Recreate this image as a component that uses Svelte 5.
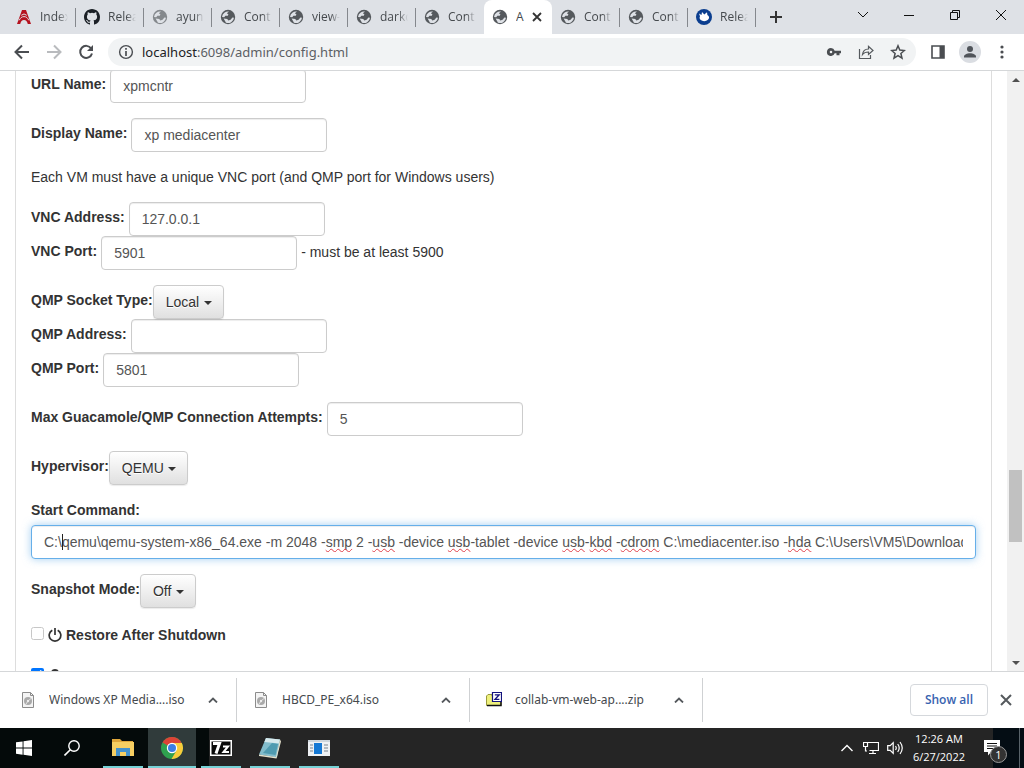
<script>
	const tabs = [
		{ icon: 'apache', title: 'Index' },
		{ icon: 'github', title: 'Relea' },
		{ icon: 'globe', title: 'ayun', loading: true },
		{ icon: 'globe', title: 'Cont' },
		{ icon: 'globe', title: 'view-' },
		{ icon: 'globe', title: 'darkc' },
		{ icon: 'globe', title: 'Cont' },
		{ icon: 'globe', title: 'A', active: true },
		{ icon: 'globe', title: 'Cont' },
		{ icon: 'globe', title: 'Cont' },
		{ icon: 'xfce', title: 'Relea' }
	];

	const downloads = [
		{ name: 'Windows XP Media....iso', kind: 'iso' },
		{ name: 'HBCD_PE_x64.iso', kind: 'iso' },
		{ name: 'collab-vm-web-ap....zip', kind: 'zip' }
	];

	const scroll = { top: 67.5, size: 12.7 };

	let urlName = 'xpmcntr';
	let displayName = 'xp mediacenter';
	let vncAddress = '127.0.0.1';
	let vncPort = '5901';
	let qmpAddress = '';
	let qmpPort = '5801';
	let attempts = '5';
	let restore = false;
	let startCommand = 'C:\\qemu\\qemu-system-x86_64.exe -m 2048 -smp 2 -usb -device usb-tablet -device usb-kbd -cdrom C:\\mediacenter.iso -hda C:\\Users\\VM5\\Downloads';

	const caretAt = 3;
	const unknownWords = /(smp|usb|kbd|cdrom|hda)/;

	// split the command so that each unknown word can be underlined
	$: before = startCommand.slice(0, caretAt);
	$: pieces = startCommand.slice(caretAt).split(unknownWords);
</script>

<svelte:head>
	<title>Admin</title>
</svelte:head>

<div class="browser">
	<header class="tab-strip">
		<div class="tabs" role="tablist">
			{#each tabs as tab}
				<div class="tab" class:active={tab.active} class:loading={tab.loading} role="tab" aria-selected={!!tab.active} tabindex="0">
					<svg width="16" height="16" viewBox="0 0 16 16">
						{#if tab.icon === 'globe'}
							<circle cx="8" cy="8" r="7.2" fill="#55595d" />
							<path d="M9 2.600 6.800 4.200l1.600 1-.6 1.500H5.400L4.200 8.300l-2.200-.4A6.100 6.100 0 0 1 9 2.600zM3.600 9.600l3.700.4 1 1.500 2.300-.7 1.800-2.200 1.600.2A6 6 0 0 1 6 13.700z" fill="#dee1e6" />
						{:else if tab.icon === 'apache'}
							<path d="M1 15 6 1h4l5 14h-3.200c-.7-2.600-1.700-4-3.800-4s-3.100 1.400-3.800 4z" fill="#b5121f" />
							<path d="M3.200 11.300C4.200 9 5.700 7.600 8 7.600s3.800 1.400 4.800 3.700M5.300 6.300Q8 3.600 10.700 6.300" fill="none" stroke="#dee1e6" stroke-width="1" />
						{:else if tab.icon === 'github'}
							<path fill="#1b2026" d="M8 0C3.580 0 0 3.580 0 8c0 3.540 2.290 6.530 5.470 7.590.4.070.55-.170.55-.380 0-.190-.010-.820-.010-1.490-2.010.370-2.530-.490-2.690-.940-.090-.230-.480-.940-.820-1.130-.280-.150-.680-.520-.010-.530.630-.010 1.080.580 1.230.820.720 1.210 1.870.870 2.330.660.070-.520.280-.870.510-1.070-1.780-.200-3.640-.890-3.640-3.950 0-.870.310-1.590.820-2.150-.080-.200-.360-1.020.080-2.120 0 0 .670-.210 2.200.820a7.600 7.600 0 0 1 4 0c1.530-1.040 2.200-.820 2.200-.820.440 1.100.160 1.920.080 2.120.510.560.820 1.270.820 2.150 0 3.070-1.870 3.750-3.650 3.950.290.250.540.730.540 1.480 0 1.070-.010 1.930-.010 2.200 0 .210.150.460.550.380A8 8 0 0 0 16 8c0-4.420-3.580-8-8-8z" />
						{:else}
							<circle cx="8" cy="8" r="8" fill="#0b3e8f" />
							<path d="M3 4.500 5.500 6 6 3l2.300 2.600L11 3.200l.4 2.700c2 .8 2.300 3.300.6 4.900-2 1.700-5.400 1.800-7.300.2C3.500 9.900 3.300 8.600 4 7.300z" fill="#fff" />
						{/if}
					</svg>
					<span class="title">{tab.title}</span>
					{#if tab.active}
						<button class="tab-close" aria-label="Close tab">
							<svg width="10" height="10" viewBox="0 0 10 10"><path d="M1 1l8 8M9 1 1 9" stroke="#333" stroke-width="1.8" /></svg>
						</button>
					{/if}
				</div>
			{/each}
		</div>
		<button class="new-tab" aria-label="New tab">
			<svg width="12" height="12" viewBox="0 0 12 12"><path d="M6 0v12M0 6h12" stroke="#333" stroke-width="2" /></svg>
		</button>
		<div class="window-buttons">
			<button aria-label="Search tabs"><svg width="12" height="12" viewBox="0 0 12 12"><path d="M1 3l5 5 5-5" /></svg></button>
			<button aria-label="Minimize"><svg width="12" height="12" viewBox="0 0 12 12"><path d="M1 6.500h10" /></svg></button>
			<button aria-label="Restore"><svg width="12" height="12" viewBox="0 0 12 12"><path d="M1.500 3.500h7v7h-7zM3.500 3.500v-2h7v7h-2" /></svg></button>
			<button aria-label="Close"><svg width="12" height="12" viewBox="0 0 12 12"><path d="M1 1l10 10M11 1 1 11" /></svg></button>
		</div>
	</header>

	<nav class="toolbar">
		<button aria-label="Back"><svg width="16" height="16" viewBox="0 0 16 16"><path d="M15 8H2M8 1.500 1.500 8 8 14.500" fill="none" stroke="#4a4d51" stroke-width="2" /></svg></button>
		<button aria-label="Forward"><svg width="16" height="16" viewBox="0 0 16 16"><path d="M1 8h13M8 1.500 14.500 8 8 14.500" fill="none" stroke="#b9bbbe" stroke-width="2" /></svg></button>
		<button aria-label="Reload">
			<svg width="16" height="16" viewBox="0 0 16 16"><path d="M13.200 4.500A6 6 0 1 0 14 9.500" fill="none" stroke="#4a4d51" stroke-width="2" /><path d="M15 1v6H9z" fill="#4a4d51" /></svg>
		</button>
		<div class="omnibox">
			<svg width="16" height="16" viewBox="0 0 16 16"><circle cx="8" cy="8" r="6.400" fill="none" stroke="#4a4d51" stroke-width="1.400" /><path d="M8 7v5M8 4v1.700" stroke="#4a4d51" stroke-width="1.700" /></svg>
			<div class="address" role="textbox" aria-label="Address" tabindex="0"><b>localhost</b>:6098/admin/config.html</div>
			<button aria-label="Passwords"><svg width="16" height="16" viewBox="0 0 16 16"><path d="M5 4a4 4 0 1 0 3.700 5.300H10.500v2h3V9.300H15V6.700H8.700A4 4 0 0 0 5 4zm0 2.700a1.300 1.300 0 1 1 0 2.600 1.300 1.300 0 0 1 0-2.600z" fill="#4a4d51" fill-rule="evenodd" /></svg></button>
			<button aria-label="Share"><svg width="16" height="16" viewBox="0 0 16 16"><path d="M1.500 5v9.500h11V11M4.500 10.500c.5-4 3-5.500 6-5.500V2.300L15 6.500l-4.500 4V8C8 8 6 8.500 4.500 10.500z" fill="none" stroke="#55595d" stroke-width="1.200" /></svg></button>
			<button aria-label="Bookmark"><svg width="16" height="16" viewBox="0 0 16 16"><path d="m8 1.800 1.800 4.300 4.600.4-3.500 3 1.100 4.600L8 11.700l-4 2.400 1.100-4.600-3.500-3 4.600-.4z" fill="none" stroke="#4a4d51" stroke-width="1.500" /></svg></button>
		</div>
		<button aria-label="Side panel"><svg width="16" height="16" viewBox="0 0 16 16"><path d="M2 2h12v12H2z" fill="none" stroke="#4a4d51" stroke-width="1.600" /><path d="M9.500 2H14v12H9.500z" fill="#4a4d51" /></svg></button>
		<button aria-label="Profile"><svg width="22" height="22" viewBox="0 0 22 22"><circle cx="11" cy="11" r="11" fill="#dadde2" /><circle cx="11" cy="8" r="3" fill="#50545a" /><path d="M5 16.500v-1c0-2 3-3.300 6-3.300s6 1.300 6 3.300v1z" fill="#50545a" /></svg></button>
		<button aria-label="Menu"><svg width="16" height="16" viewBox="0 0 16 16" fill="#4a4d51"><circle cx="8" cy="3" r="1.600" /><circle cx="8" cy="8" r="1.600" /><circle cx="8" cy="13" r="1.600" /></svg></button>
	</nav>

	<div class="viewport">
		<main>
			<form class="panel">
				<div class="group row">
					<label for="url-name">URL Name:</label>
					<input id="url-name" class="control" bind:value={urlName}>
				</div>
				<div class="group row">
					<label for="display-name">Display Name:</label>
					<input id="display-name" class="control" bind:value={displayName}>
				</div>
				<p class="group">Each VM must have a unique VNC port (and QMP port for Windows users)</p>
				<div class="group">
					<div class="row">
						<label for="vnc-address">VNC Address:</label>
						<input id="vnc-address" class="control" bind:value={vncAddress}>
					</div>
					<div class="row">
						<label for="vnc-port">VNC Port:</label>
						<input id="vnc-port" class="control" bind:value={vncPort}>
						<span class="hint">- must be at least 5900</span>
					</div>
				</div>
				<div class="group">
					<div class="row tight">
						<label for="qmp-type">QMP Socket Type:</label>
						<span class="dropdown"><select id="qmp-type"><option>Local</option></select></span>
					</div>
					<div class="row">
						<label for="qmp-address">QMP Address:</label>
						<input id="qmp-address" class="control" bind:value={qmpAddress}>
					</div>
					<div class="row">
						<label for="qmp-port">QMP Port:</label>
						<input id="qmp-port" class="control" bind:value={qmpPort}>
					</div>
				</div>
				<div class="group row">
					<label for="attempts">Max Guacamole/QMP Connection Attempts:</label>
					<input id="attempts" class="control" bind:value={attempts}>
				</div>
				<div class="group row tight">
					<label for="hypervisor">Hypervisor:</label>
					<span class="dropdown"><select id="hypervisor"><option>QEMU</option></select></span>
				</div>
				<div class="group command">
					<label for="start-command">Start Command:</label>
					<div class="command-box">
						<input id="start-command" class="control focused" spellcheck="false" bind:value={startCommand}>
						<div class="marks" aria-hidden="true">{before}<i class="caret"></i>{#each pieces as piece, i}{#if i % 2}<u>{piece}</u>{:else}{piece}{/if}{/each}</div>
					</div>
				</div>
				<div class="group row tight">
					<label for="snapshot">Snapshot Mode:</label>
					<span class="dropdown"><select id="snapshot"><option>Off</option></select></span>
				</div>
				<div class="check">
					<input id="restore" type="checkbox" bind:checked={restore}>
					<label for="restore">
						<svg width="14" height="14" viewBox="0 0 14 14"><path d="M4.300 2.200a5.800 5.800 0 1 0 5.400 0M7 0v7" fill="none" stroke="#333" stroke-width="1.700" /></svg>
						Restore After Shutdown
					</label>
				</div>
				<div class="check">
					<input type="checkbox" checked aria-label="Turbo">
					<svg width="14" height="14" viewBox="0 0 14 14"><circle cx="7" cy="4" r="4" fill="#333" /><path d="M0 14c0-4 3-5 7-5s7 1 7 5z" fill="#333" /></svg>
				</div>
			</form>
		</main>
		<div class="scrollbar">
			<button aria-label="Scroll up"><svg width="8" height="4" viewBox="0 0 8 4"><path d="M0 4 4 0l4 4z" fill="#505050" /></svg></button>
			<div class="track">
				<div class="thumb" style="top: {scroll.top}%; height: {scroll.size}%"></div>
			</div>
			<button aria-label="Scroll down"><svg width="8" height="4" viewBox="0 0 8 4"><path d="M0 0h8L4 4z" fill="#505050" /></svg></button>
		</div>
	</div>

	<footer class="downloads">
		{#each downloads as file}
			<div class="download">
				<svg width="16" height="16" viewBox="0 0 16 16">
					{#if file.kind === 'iso'}
						<path d="M2.500.5h8l3 3v12h-11z" fill="#f4f4f4" stroke="#8c8c8c" />
						<path d="M10.500.5v3h3" fill="none" stroke="#8c8c8c" />
						<circle cx="8" cy="9" r="4" fill="#a9a9a9" />
						<path d="m8 9 3-2.500M8 9l-2 3" stroke="#e4e4e4" />
						<circle cx="8" cy="9" r="1.200" fill="#eee" />
					{:else}
						<path d="M.5 4 2 2.500h4V4h9v9.500H.5z" fill="#eef07c" stroke="#9a9a3c" />
						<path d="M1 13.500h14V10" fill="none" stroke="#111" stroke-width="1.500" />
						<path d="M6.500.5h9v9h-9z" fill="#fff" stroke="#12127c" stroke-width="1.200" />
						<path d="M8.800 2.800h4.400L9 7.300h4.400" fill="none" stroke="#12127c" stroke-width="1.300" />
					{/if}
				</svg>
				<span class="file-name">{file.name}</span>
				<button aria-label="Options for {file.name}"><svg width="10" height="6" viewBox="0 0 10 6"><path d="m1 5.500 4-4 4 4" fill="none" stroke="#55595d" stroke-width="1.800" /></svg></button>
			</div>
		{/each}
		<button class="show-all">Show all</button>
		<button class="close-shelf" aria-label="Close downloads"><svg width="12" height="12" viewBox="0 0 12 12"><path d="m1 1 10 10M11 1 1 11" stroke="#55595d" stroke-width="2" /></svg></button>
	</footer>

	<footer class="taskbar">
		<div class="launchers">
			<button aria-label="Start"><svg width="16" height="16" viewBox="0 0 16 16"><path d="M0 2.300 6.600 1.400v6.200H0zM7.500 1.200 16 0v7.600H7.500zM0 8.500h6.600v6.200L0 13.800zM7.500 8.500H16V16l-8.500-1.200z" fill="#fff" /></svg></button>
			<button aria-label="Search"><svg width="16" height="16" viewBox="0 0 16 16"><circle cx="10" cy="6" r="5.200" fill="none" stroke="#fff" stroke-width="1.400" /><path d="M6.300 9.700.500 15.500" stroke="#fff" stroke-width="1.600" /></svg></button>
		</div>
		<div class="apps">
			<button class="open" aria-label="File Explorer">
				<svg width="22" height="20" viewBox="0 0 22 20"><path d="M0 1h8l2 2h11v5H0z" fill="#dfa63a" /><path d="M0 4h22v14H0z" fill="#f7cf62" /><path d="M4 10h14v8h-4v-4H8v4H4z" fill="#4592cc" /></svg>
			</button>
			<button class="open current" aria-label="Google Chrome">
				<svg width="22" height="22" viewBox="0 0 22 22">
					<circle cx="11" cy="11" r="11" fill="#2fa14f" />
					<path d="M11 11 1.500 5.500A11 11 0 0 1 20.500 5.500z" fill="#dd4336" />
					<path d="M11 11V6h9.800A11 11 0 0 1 10.500 22l5-8.500z" fill="#f9cb3b" />
					<circle cx="11" cy="11" r="5.200" fill="#fff" /><circle cx="11" cy="11" r="4" fill="#3d7de4" />
				</svg>
			</button>
			<button class="open" aria-label="7-Zip">
				<svg width="22" height="16" viewBox="0 0 22 16"><path d="M0 0h22v16H0z" fill="#fff" /><path d="M1.500 1.500h19v13h-19z" fill="#080808" /><path d="M3 3.500h6.500L6 13.500" fill="none" stroke="#fff" stroke-width="3" /><path d="M13 6.500h5L13.500 12H19" fill="none" stroke="#fff" stroke-width="2" /></svg>
			</button>
			<button class="open" aria-label="Notepad">
				<svg width="22" height="22" viewBox="0 0 22 22"><path d="M7 1 21 2.500l-3 18L0 17.500z" fill="#82bccb" /><path d="M7 1 21 2.500l-1 4L5.300 5z" fill="#d7e9ec" /><path d="m21 2.500 1 2-4.500 17L0 19v-1.500l17 2.500z" fill="#e5e2cd" /><path d="m4 16 9-10 6 1-2.500 11z" fill="#4f9bb0" /></svg>
			</button>
			<button class="open" aria-label="Virtual machine">
				<svg width="22" height="16" viewBox="0 0 22 16"><path d="M0 0h22v16H0z" fill="#eef1f4" /><path d="M0 0h22v2H0z" fill="#cdd5dc" /><path d="M6 3h8v11H6z" fill="#1478d4" /><path d="M2 5h3M2 8h3M2 11h3M16 5h4M16 8h4M16 11h4" stroke="#76828e" /></svg>
			</button>
		</div>
		<div class="tray">
			<button aria-label="Show hidden icons"><svg width="12" height="8" viewBox="0 0 12 8"><path d="m.5 7 5.500-5.500L11.500 7" fill="none" stroke="#fff" stroke-width="1.400" /></svg></button>
			<button aria-label="Network"><svg width="16" height="14" viewBox="0 0 16 14"><path d="M4.500 1.500h11v8h-9M.500 1.500h4v4h-4zM2.500 5.500v4.500H4M10 9.500v3M6 12.500h7" fill="none" stroke="#fff" stroke-width="1.200" /></svg></button>
			<button aria-label="Volume"><svg width="16" height="14" viewBox="0 0 16 14"><path d="M.7 4.700h2.500l3-3v10.600l-3-3H.700zM8.500 5q1.500 2 0 4M10.700 3q3 4 0 8M13 1q4.500 6 0 12" fill="none" stroke="#fff" stroke-width="1.200" /></svg></button>
			<div class="clock"><time>12:26 AM</time><time>6/27/2022</time></div>
		</div>
		<button class="notices" aria-label="Notifications">
			<svg width="16" height="16" viewBox="0 0 16 16"><path d="M0 0h16v12H7l-3 3.500V12H0z" fill="#fff" /><path d="M3 3.500h10M3 6h10M3 8.500h7" stroke="#111" /></svg>
			<span class="badge">1</span>
		</button>
	</footer>
</div>

<style>
	:global(body) {
		margin: 0;
		overflow: hidden;
	}

	.browser {
		display: flex;
		flex-direction: column;
		height: 100vh;
		background: #fff;
		color: #333;
		font: 14px/20px 'Liberation Sans', Arial, sans-serif;
	}

	.browser *, .browser *::after {
		box-sizing: border-box;
	}

	svg {
		display: block;
		flex: none;
	}

	button {
		display: flex;
		align-items: center;
		justify-content: center;
		flex: none;
		padding: 0;
		border: 0;
		background: none;
		color: inherit;
		font: inherit;
	}

	/* tabs */
	.tab-strip {
		display: flex;
		flex: none;
		height: 34px;
		padding-left: 8px;
		background: #dee1e6;
		font: 12px/16px 'Open Sans', 'Segoe UI', sans-serif;
	}

	.tabs {
		display: flex;
		flex: 0 1 748px;
		min-width: 0;
	}

	.tab {
		position: relative;
		display: flex;
		align-items: center;
		flex: 1 1 0;
		gap: 8px;
		min-width: 0;
		padding: 0 8px;
		color: #45494d;
	}

	.tab::after {
		content: '';
		position: absolute;
		right: 0;
		top: 8px;
		width: 1px;
		height: 19px;
		background: #85888d;
	}

	.tab.active::after, .tab:has(+ .active)::after {
		display: none;
	}

	.tab.loading svg {
		opacity: 0.65;
	}

	.tab.active {
		border-radius: 8px 8px 0 0;
		background: #fff;
	}

	.title {
		flex: 1;
		overflow: hidden;
		white-space: nowrap;
		mask-image: linear-gradient(to right, #000 65%, transparent);
	}

	.active .title {
		mask-image: none;
	}

	.tab-close {
		width: 14px;
		margin-left: -4px;
	}

	.new-tab {
		width: 40px;
	}

	.window-buttons {
		display: flex;
		height: 29px;
		margin-left: auto;
	}

	.window-buttons button {
		width: 46px;
	}

	.window-buttons svg {
		fill: none;
		stroke: #111;
	}

	/* address bar */
	.toolbar {
		display: flex;
		align-items: center;
		flex: none;
		height: 37px;
		padding: 0 6px;
		border-bottom: 1px solid #d5d7d9;
		font: 13px/20px 'Noto Sans', 'Segoe UI', sans-serif;
	}

	.toolbar button {
		width: 32px;
		height: 32px;
	}

	.omnibox {
		display: flex;
		align-items: center;
		flex: 1;
		height: 28px;
		margin: 0 6px;
		padding: 0 2px 0 10px;
		border-radius: 14px;
		background: #f1f3f4;
	}

	.address {
		flex: 1;
		padding-left: 8px;
		color: #5c6064;
	}

	.address b {
		color: #202124;
		font-weight: 400;
	}

	/* page */
	.viewport {
		display: flex;
		flex: 1;
		min-height: 0;
		overflow: hidden;
	}

	main {
		flex: 1;
		min-width: 0;
		padding: 0 15px;
	}

	.panel {
		margin-top: -2px;
		padding: 0 15px;
		border: solid #ddd;
		border-width: 0 1px;
	}

	.group {
		margin: 0 0 15px;
	}

	.row {
		display: flex;
		align-items: center;
		gap: 4px;
	}

	.row.tight {
		gap: 0;
	}

	label {
		font-weight: 700;
	}

	.row label {
		padding-bottom: 4px;
	}

	.hint {
		padding-bottom: 2px;
	}

	.control {
		width: 196px;
		height: 34px;
		padding: 6px 12px;
		border: 1px solid #ccc;
		border-radius: 4px;
		background: #fff;
		box-shadow: inset 0 1px 1px rgba(0, 0, 0, 0.075);
		color: #555;
		font: inherit;
	}

	.dropdown {
		position: relative;
		display: flex;
	}

	.dropdown::after {
		content: '';
		position: absolute;
		right: 12px;
		top: 16px;
		border: solid transparent;
		border-width: 4px 4px 0;
		border-top-color: #333;
		pointer-events: none;
	}

	select {
		appearance: none;
		height: 34px;
		padding: 6px 23px 6px 12px;
		border: 1px solid #ccc;
		border-radius: 4px;
		background: linear-gradient(#fff, #e0e0e0);
		box-shadow: 0 1px 1px rgba(0, 0, 0, 0.08);
		color: #333;
		font: inherit;
		text-shadow: 0 1px 0 #fff;
	}

	.command label {
		display: block;
		margin-bottom: 5px;
	}

	.command-box {
		position: relative;
	}

	.control.focused {
		display: block;
		width: 100%;
		border-color: #66afe9;
		outline: 0;
		box-shadow: inset 0 1px 1px rgba(0, 0, 0, 0.075), 0 0 8px rgba(102, 175, 233, 0.6);
	}

	/* lies over the input and shows only the caret and the underlines */
	.marks {
		position: absolute;
		inset: 7px 13px;
		overflow: hidden;
		color: transparent;
		white-space: pre;
		pointer-events: none;
	}

	.marks u {
		text-decoration: underline wavy #e0404a 1px;
		text-decoration-skip-ink: none;
	}

	.caret {
		display: inline-block;
		width: 1px;
		height: 16px;
		margin-right: -1px;
		background: #222;
		vertical-align: text-bottom;
	}

	.check {
		display: flex;
		align-items: center;
		gap: 4px;
		height: 20px;
		margin: 17px 0 21px;
	}

	.check input {
		width: 13px;
		height: 13px;
		margin: 0 0 3px;
	}

	.check input:not(:checked) {
		opacity: 0.4;
	}

	.check label {
		display: flex;
		align-items: center;
		gap: 4px;
	}

	.scrollbar {
		display: flex;
		flex-direction: column;
		width: 17px;
		background: #f1f1f1;
	}

	.scrollbar button {
		width: 17px;
		height: 17px;
	}

	.track {
		position: relative;
		flex: 1;
	}

	.thumb {
		position: absolute;
		left: 2px;
		right: 2px;
		background: #c1c1c1;
	}

	/* download shelf */
	.downloads {
		display: flex;
		align-items: center;
		flex: none;
		height: 57px;
		padding: 0 6px 0 4px;
		border-top: 1px solid #d5d7d9;
		color: #45494d;
		font: 12px/16px 'Noto Sans', 'Segoe UI', sans-serif;
	}

	.download {
		display: flex;
		align-items: center;
		flex: 0 1 233px;
		gap: 13px;
		min-width: 0;
		height: 44px;
		padding: 0 13px 0 16px;
		border-right: 1px solid #cfd1d3;
	}

	.file-name {
		flex: 1;
		overflow: hidden;
		white-space: nowrap;
	}

	.download button {
		width: 20px;
		height: 20px;
	}

	.show-all {
		height: 32px;
		margin: 0 6px 0 auto;
		padding: 0 14px;
		border: 1px solid #d5d8dc;
		border-radius: 4px;
		color: #3863b0;
		font-family: 'Open Sans', 'Segoe UI', sans-serif;
		font-weight: 600;
	}

	.close-shelf {
		width: 24px;
		height: 24px;
	}

	/* taskbar */
	.taskbar {
		display: flex;
		flex: none;
		height: 40px;
		background: linear-gradient(to right, #040a0a 209px, #252525 209px);
		color: #fff;
		font: 11px/18px 'Open Sans', 'Segoe UI', sans-serif;
	}

	.launchers, .apps {
		display: flex;
	}

	.apps {
		gap: 1px;
		margin-left: 3px;
	}

	.launchers button, .apps button {
		position: relative;
		width: 48px;
		height: 40px;
	}

	.open::after {
		content: '';
		position: absolute;
		left: 4px;
		right: 4px;
		bottom: 0;
		height: 2px;
		background: #76d2d6;
	}

	.open.current {
		background: #303b3b;
	}

	.open.current::after {
		left: 0;
		right: 0;
	}

	.tray {
		display: flex;
		align-items: center;
		margin-left: auto;
	}

	.tray button {
		width: 24px;
		height: 40px;
	}

	.clock {
		display: flex;
		flex-direction: column;
		align-items: center;
		margin: 0 16px 0 6px;
	}

	.notices {
		position: relative;
		width: 43px;
		padding-right: 22px;
		background: linear-gradient(to right, #252525 12px, #040d14 12px, #040d14 38px, #59636a 38px, #59636a 39px, #040d14 39px);
	}

	.badge {
		position: absolute;
		left: 9px;
		top: 18px;
		width: 17px;
		height: 17px;
		border: 1px solid #999;
		border-radius: 50%;
		background: #333;
		line-height: 15px;
		text-align: center;
	}
</style>
